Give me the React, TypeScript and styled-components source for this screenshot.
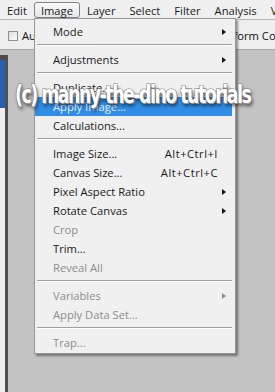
import styled, { createGlobalStyle, css } from 'styled-components'

const GlobalStyle = createGlobalStyle`
  html, body {
    margin: 0;
    padding: 0;
  }
  body {
    width: 275px;
    height: 392px;
    overflow: hidden;
    background: #c3c3c3;
  }
`

type Entry =
  | { kind: 'sep' }
  | { kind: 'item'; label: string; sub?: boolean; keys?: string; off?: boolean; active?: boolean }

const entries: Entry[] = [
  { kind: 'item', label: 'Mode', sub: true },
  { kind: 'sep' },
  { kind: 'item', label: 'Adjustments', sub: true },
  { kind: 'sep' },
  { kind: 'item', label: 'Duplicate...' },
  { kind: 'item', label: 'Apply Image...', active: true },
  { kind: 'item', label: 'Calculations...' },
  { kind: 'sep' },
  { kind: 'item', label: 'Image Size...', keys: 'Alt+Ctrl+I' },
  { kind: 'item', label: 'Canvas Size...', keys: 'Alt+Ctrl+C' },
  { kind: 'item', label: 'Pixel Aspect Ratio', sub: true },
  { kind: 'item', label: 'Rotate Canvas', sub: true },
  { kind: 'item', label: 'Crop', off: true },
  { kind: 'item', label: 'Trim...' },
  { kind: 'item', label: 'Reveal All', off: true },
  { kind: 'sep' },
  { kind: 'item', label: 'Variables', sub: true, off: true },
  { kind: 'item', label: 'Apply Data Set...', off: true },
  { kind: 'sep' },
  { kind: 'item', label: 'Trap...', off: true },
]

const topMenus = ['Edit', 'Image', 'Layer', 'Select', 'Filter', 'Analysis', 'View']

const App = () => {
  return (
    <Screen>
      <GlobalStyle />
      <MenuBar>
        {topMenus.map(m => (
          <TopItem key={m} $open={m === 'Image'}>{m}</TopItem>
        ))}
      </MenuBar>
      <OptionsBar>
        <Check />
        <OptLabel>Auto-Select:</OptLabel>
        <Check $gap={75} />
        <OptLabel>Show Transform Controls</OptLabel>
      </OptionsBar>
      <Workspace>
        <LeftDock>
          <DockHead />
          <DockTab />
          <DockBody />
        </LeftDock>
        <Canvas />
      </Workspace>

      <Dropdown>
        {entries.map((e, i) =>
          e.kind === 'sep' ? (
            <Separator key={i} />
          ) : (
            <Item key={i} $off={e.off} $active={e.active}>
              <span>{e.label}</span>
              {e.keys && <Keys>{e.keys}</Keys>}
              {e.sub && <Arrow $off={e.off} />}
            </Item>
          )
        )}
      </Dropdown>

      <Watermark>(c) manny-the-dino tutorials</Watermark>
    </Screen>
  )
}

export default App

const Screen = styled.div`
  position: relative;
  width: 275px;
  height: 392px;
  overflow: hidden;
  display: flex;
  flex-direction: column;
  background: #c3c3c3;
  font-family: 'Open Sans', 'Noto Sans', sans-serif;
  font-size: 11.2px;
  color: #1a1a1a;
`

const MenuBar = styled.div`
  height: 19px;
  flex-shrink: 0;
  display: flex;
  align-items: center;
  background: #f0f0f0;
  border-bottom: 1px solid #b4b4b4;
  white-space: nowrap;
`

const TopItem = styled.div<{ $open?: boolean }>`
  height: 16px;
  line-height: 15px;
  padding: 0 6px;
  box-sizing: border-box;
  border: 1px solid transparent;
  margin-top: 1px;
  ${p =>
    p.$open &&
    css`
      border-color: #7f8287;
      border-radius: 3px;
      background: linear-gradient(#fafafa, #e6e6e6);
    `}
`

const OptionsBar = styled.div`
  height: 30px;
  flex-shrink: 0;
  display: flex;
  align-items: center;
  padding: 2px 0 0 8px;
  box-sizing: border-box;
  background: #eeeeee;
  border-bottom: 1px solid #a8a8a8;
  white-space: nowrap;
`

const Check = styled.div<{ $gap?: number }>`
  width: 10px;
  height: 10px;
  flex-shrink: 0;
  box-sizing: border-box;
  border: 1px solid #8e8f8f;
  background: linear-gradient(135deg, #dcdcdc, #fbfbfb);
  margin-left: ${p => p.$gap ?? 0}px;
  margin-right: 4px;
`

const OptLabel = styled.span`
  color: #111;
`

const Workspace = styled.div`
  flex: 1;
  display: flex;
`

const LeftDock = styled.div`
  width: 8px;
  margin-top: 5px;
  display: flex;
  flex-direction: column;
  box-sizing: border-box;
  border-right: 3px solid #505050;
`

const DockHead = styled.div`
  height: 5px;
  background: #4c4c4c;
`

const DockTab = styled.div`
  height: 48px;
  background: #2c5fae;
`

const DockBody = styled.div`
  flex: 1;
  background: #eeeeee;
`

const Canvas = styled.div`
  flex: 1;
  background: #c3c3c3;
`

const Dropdown = styled.div`
  position: absolute;
  left: 34px;
  top: 18px;
  width: 202px;
  box-sizing: border-box;
  padding: 3px 3px 1px 0;
  background: #f0f0f0;
  border: 1px solid #979797;
  box-shadow: 2px 2px 2px rgba(0, 0, 0, 0.4);
  white-space: nowrap;
`

const Item = styled.div<{ $off?: boolean; $active?: boolean }>`
  height: 19px;
  box-sizing: border-box;
  padding: 1px 6px 1px 18px;
  display: flex;
  align-items: center;
  background-clip: content-box;
  color: ${p => (p.$off ? '#8d8d8d' : '#1a1a1a')};
  ${p =>
    p.$active &&
    css`
      background: #2f8de8;
      background-clip: padding-box;
      color: #e9eefb;
    `}
`

const Keys = styled.span`
  margin-left: auto;
  margin-right: 8px;
  letter-spacing: 0.5px;
`

const Arrow = styled.span<{ $off?: boolean }>`
  margin-left: auto;
  width: 0;
  height: 0;
  border-top: 3px solid transparent;
  border-bottom: 3px solid transparent;
  border-left: 4px solid ${p => (p.$off ? '#8d8d8d' : '#111')};
`

const Separator = styled.div`
  height: 1px;
  margin: 3px 0 4px 2px;
  border-top: 1px solid #a0a0a0;
  background: #ffffff;
`

const Watermark = styled.div`
  position: absolute;
  left: 15px;
  top: 81px;
  font-family: 'DejaVu Sans Condensed', 'DejaVu Sans', sans-serif;
  font-weight: bold;
  font-size: 24px;
  letter-spacing: -1.8px;
  color: #ffffff;
  -webkit-text-stroke: 1.2px #777777;
  paint-order: stroke fill;
  text-shadow: 1px 1px 0 #9a9a9a, 2px 3px 4px rgba(0, 0, 0, 0.65);
  white-space: nowrap;
  transform: scaleX(0.8);
  transform-origin: left center;
`
